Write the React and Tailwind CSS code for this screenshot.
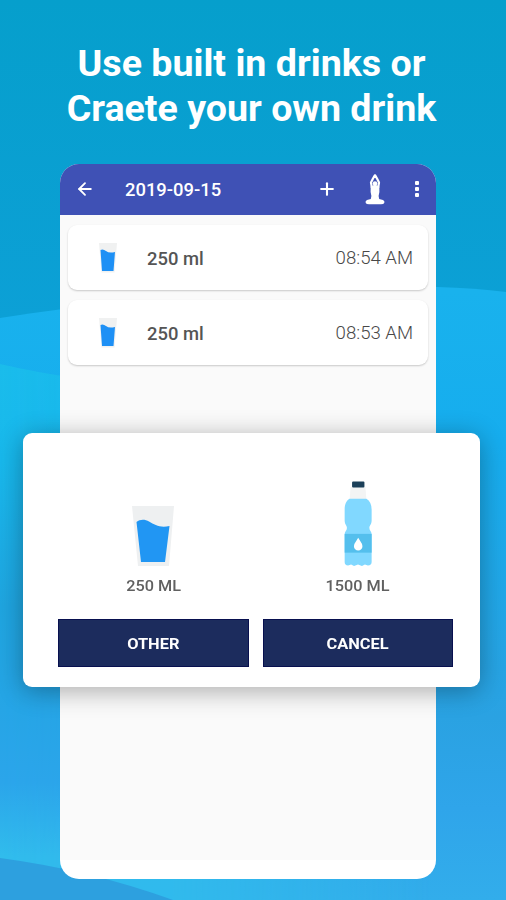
import { ArrowLeft, Plus } from 'lucide-react';

const entries = [
  { amount: '250 ml', time: '08:54 AM' },
  { amount: '250 ml', time: '08:53 AM' },
];

const Glass = ({ className }) => (
  <svg viewBox="0 0 42 60" className={className}>
    <path d="M0 0H42L37 60H6Z" fill="#eef0f1" />
    <path d="M4.500 16C8 13 13 13 17 15.500C23 19 28 22 37.500 20L33 56H9Z" fill="#2196f3" />
  </svg>
);

const SmallGlass = () => (
  <svg viewBox="0 0 18 30" className="w-[18px] h-[30px]">
    <path d="M0 0H18L15.500 29.500H2.500Z" fill="#f0f1f1" />
    <path d="M1.500 7Q4 5.500 7 8Q10 10.500 16 9L14.500 28H3Z" fill="#1e90f5" />
  </svg>
);

const Bottle = ({ className }) => (
  <svg viewBox="0 0 28 86" className={className}>
    <path d="M6.500 6H21.500L22.500 19H5.500Z" fill="#f3f4f4" />
    <rect x="8" y="0.500" width="12.500" height="6" rx="1" fill="#1c4059" />
    <path d="M5.500 18H22.500C26 20 27.800 24 27.800 29V40C27.800 44 25.500 45 25.500 47.500C25.500 50 27.800 51 27.800 54V82Q27.800 85.500 24 85.500L21 84.500L18 86L14 84.500L10 86L7 84.500L4 85.500Q0.500 85.500 0.500 82V54C0.500 51 2.800 50 2.800 47.500C2.800 45 0.500 44 0.500 40V29C0.500 24 2 20 5.500 18Z" fill="#81d8ff" />
    <rect x="0.500" y="53.500" width="27.300" height="19" fill="#54bfed" />
    <path d="M14.200 57.500C16 61 18.500 63 18.500 66A4.300 4.300 0 0 1 9.900 66C9.900 63 12.500 61 14.200 57.500Z" fill="#fff" />
  </svg>
);

const Yoga = () => (
  <svg viewBox="0 0 20 31" className="w-5 h-[31px]" fill="#fff">
    <path d="M9.700 1.500L8 4.500L6 8.500L6.800 13.500M10.300 1.500L12 4.500L14 8.500L13.200 13.500" fill="none" stroke="#fff" strokeWidth="2.200" strokeLinejoin="round" strokeLinecap="round" />
    <circle cx="10" cy="9.500" r="2.300" />
    <path d="M5.700 12.500L9 11H11L14.300 12.500L14.400 18L13.600 22L14.200 25L18 26Q20 27 19.300 29Q18.500 30.300 16 30.300H4Q1.500 30.300 0.700 29Q0 27 2 26L5.800 25L6.400 22L5.600 18Z" />
  </svg>
);

const Background = () => (
  <svg viewBox="0 0 506 900" className="absolute inset-0 w-full h-full" preserveAspectRatio="none">
    <defs>
      <linearGradient id="sky" gradientUnits="userSpaceOnUse" x1="0" y1="0" x2="0" y2="320">
        <stop offset="0" stopColor="#069fcc" />
        <stop offset="1" stopColor="#0ca0d6" />
      </linearGradient>
      <linearGradient id="mid" gradientUnits="userSpaceOnUse" x1="0" y1="290" x2="0" y2="900">
        <stop offset="0" stopColor="#19b2ed" />
        <stop offset="0.250" stopColor="#16adee" />
        <stop offset="0.700" stopColor="#2aa2e2" />
        <stop offset="0.850" stopColor="#2fa5ea" />
        <stop offset="1" stopColor="#32adeb" />
      </linearGradient>
      <linearGradient id="front" gradientUnits="userSpaceOnUse" x1="0" y1="365" x2="0" y2="900">
        <stop offset="0" stopColor="#1abceb" />
        <stop offset="0.180" stopColor="#18b8ec" />
        <stop offset="0.450" stopColor="#1fa5e0" />
        <stop offset="0.780" stopColor="#2ba5ea" />
        <stop offset="0.920" stopColor="#31bcec" />
        <stop offset="1" stopColor="#31bcec" />
      </linearGradient>
      <linearGradient id="fade" gradientUnits="userSpaceOnUse" x1="0" y1="0" x2="430" y2="0">
        <stop offset="0" stopColor="#fff" />
        <stop offset="0.140" stopColor="#ddd" />
        <stop offset="0.400" stopColor="#ddd" />
        <stop offset="1" stopColor="#000" />
      </linearGradient>
      <mask id="left">
        <rect width="506" height="900" fill="url(#fade)" />
      </mask>
    </defs>
    <rect width="506" height="900" fill="url(#sky)" />
    <path d="M0 318C140 296 280 286 437 287Q475 288 506 292V900H0Z" fill="url(#mid)" />
    <path d="M0 364Q40 373 70 377L506 420V900H0Z" fill="url(#front)" mask="url(#left)" />
    <path d="M0 858Q90 870 173 900H0Z" fill="#2da0df" />
  </svg>
);

const DrinkRow = ({ entry }) => (
  <div className="flex items-center h-[65px] rounded-[9px] bg-white pl-[31px] pr-[15px] shadow-[0_1px_2px_rgba(0,0,0,0.2)]">
    <SmallGlass />
    <span className="ml-[30px] mt-0.5 text-[18.400px] font-medium text-[#555]">{entry.amount}</span>
    <span className="ml-auto mt-0.5 text-[18.600px] font-light text-[#484848]">{entry.time}</span>
  </div>
);

const DialogButton = ({ children }) => (
  <button className="h-12 bg-[#1c2c5d] border border-[#08104f] pt-0.5 text-[14px] font-bold text-white">
    <span className="inline-block scale-x-[1.170]">{children}</span>
  </button>
);

const Dialog = () => (
  <div className="absolute left-[23px] top-[433px] w-[457px] h-[254px] rounded-[9px] bg-white pl-[35px] pr-[27px] pt-12 shadow-[0_4px_26px_rgba(0,0,0,0.32)]">
    <div className="grid grid-cols-2 gap-[14px] text-center text-[14px] leading-5 font-medium text-[#606060]">
      <div className="flex flex-col items-center justify-end h-[115px]">
        <Glass className="w-[42px] h-[60px] mb-2.5" />
        <span className="scale-x-[1.160]">250 ML</span>
      </div>
      <div className="flex flex-col items-center justify-end h-[115px]">
        <Bottle className="w-7 h-[86px] mb-2.5" />
        <span className="scale-x-[1.160]">1500 ML</span>
      </div>
    </div>
    <div className="grid grid-cols-2 gap-[14px] mt-[23px]">
      <DialogButton>OTHER</DialogButton>
      <DialogButton>CANCEL</DialogButton>
    </div>
  </div>
);

const App = () => {
  return (
    <div className="relative w-[506px] h-[900px] overflow-hidden font-['Roboto',sans-serif]">
      <Background />
      <div className="relative flex flex-col items-center">
        <h1 className="h-[164px] pt-[41px] pr-[3px] text-center text-[37.600px] leading-[45px] font-bold text-white whitespace-nowrap">
          Use built in drinks or
          <br />
          Craete your own drink
        </h1>
        <main className="w-[376px] h-[715px] mr-[10px] rounded-[19px] overflow-hidden bg-white">
          <header className="flex items-center h-[51px] bg-[#3f51b5] text-white pl-[15px] pr-[17px] pb-px">
            <ArrowLeft size={20} strokeWidth={2.200} />
            <span className="ml-[30px] mt-px text-[18.400px] font-medium">2019-09-15</span>
            <Plus size={20} strokeWidth={2.500} className="ml-auto" />
            <div className="ml-7">
              <Yoga />
            </div>
            <div className="flex flex-col gap-[2px] ml-[30px]">
              <i className="w-1 h-1 rounded-[1px] bg-white" />
              <i className="w-1 h-1 rounded-[1px] bg-white" />
              <i className="w-1 h-1 rounded-[1px] bg-white" />
            </div>
          </header>
          <div className="flex flex-col gap-2.5 h-[645px] px-2 pt-2.5 bg-[#fafafa]">
            {entries.map((entry) => (
              <DrinkRow key={entry.time} entry={entry} />
            ))}
          </div>
        </main>
      </div>
      <Dialog />
    </div>
  );
};

export default App;
